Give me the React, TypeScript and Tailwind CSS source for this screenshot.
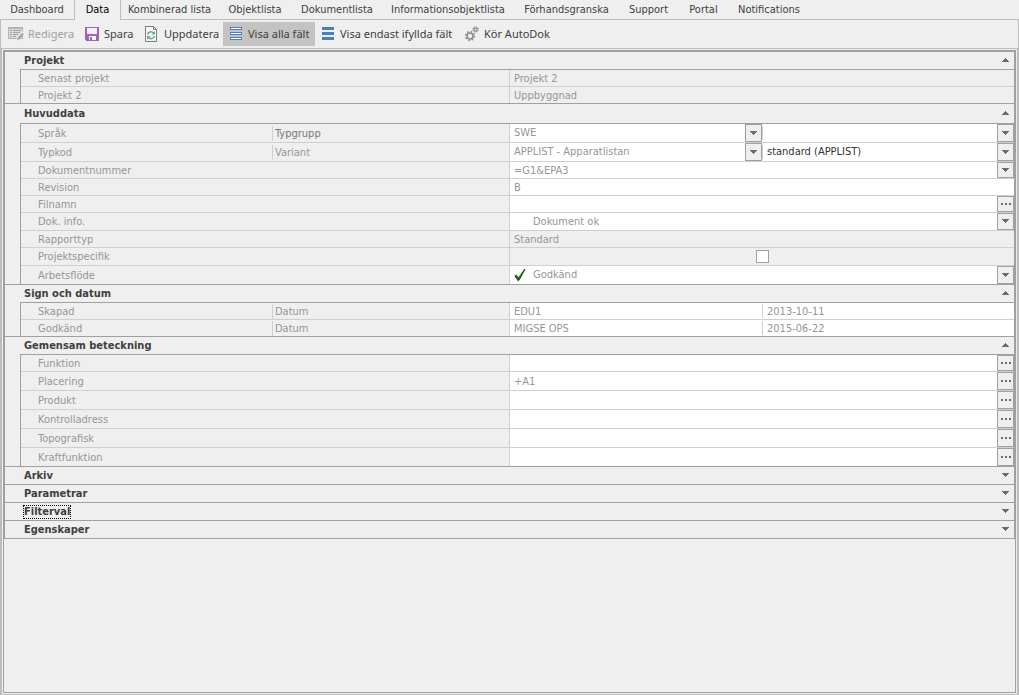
import { useState } from "react";
import type { ReactNode } from "react";
import clsx from "clsx";

const tabs = [
  { name: "Dashboard", width: "w-[74px]" },
  { name: "Data", width: "w-[47px]" },
  { name: "Kombinerad lista", width: "w-[97px]" },
  { name: "Objektlista", width: "w-[74px]" },
  { name: "Dokumentlista", width: "w-[90px]" },
  { name: "Informationsobjektlista", width: "w-[132px]" },
  { name: "Förhandsgranska", width: "w-[105px]" },
  { name: "Support", width: "w-[59px]" },
  { name: "Portal", width: "w-[51px]" },
  { name: "Notifications", width: "w-[80px]" },
];

function EditIcon() {
  return (
    <svg width="16" height="16" viewBox="0 0 16 16" shapeRendering="crispEdges">
      <path d="M0 1h15v12H0z" fill="#b4b4b4" />
      <path d="M1 3h13v9H1z" fill="#dcdcdc" />
      <path d="M2 4h2v1H2zM5 4h8v1H5zM2 6h2v1H2zM5 6h7v1H5zM2 8h2v1H2zM5 8h5v1H5zM2 10h2v1H2zM5 10h3v1H5z" fill="#a4a4a4" />
      <path d="M8 15l1-4 5-6 2 2-5 6z" fill="#efefef" shapeRendering="auto" />
      <path d="M9 14.5l.8-3L14 6.500l1.800 1.800-4.300 5z" fill="#a8a8a8" shapeRendering="auto" />
    </svg>
  );
}

function SaveIcon() {
  return (
    <svg width="16" height="16" viewBox="0 0 16 16" shapeRendering="crispEdges">
      <path d="M1 1h14v14H2l-1-1z" fill="#9b66ba" />
      <path d="M3 2h10v6H3z" fill="#f4f1f6" />
      <path d="M5 10h7v4H5z" fill="#f4f1f6" />
      <path d="M6 11h2v3H6z" fill="#9b66ba" />
    </svg>
  );
}

function RefreshIcon() {
  return (
    <svg width="16" height="16" viewBox="0 0 16 16" fill="none">
      <path d="M1.5.5h8l3 3v12h-11z" fill="#f6f6f6" stroke="#7d7d7d" />
      <path d="M9.5.5v3h3" stroke="#7d7d7d" />
      <path d="M3.5 8.500C4 5.500 8 5 9.700 7.200M10.500 10c-.5 3-4.500 3.500-6.200 1.300" stroke="#6aa58c" strokeWidth="1.5" />
      <path d="M11 5v3.500H7.500zM3 13.500V10h3.500z" fill="#6aa58c" />
    </svg>
  );
}

function AllFieldsIcon() {
  return (
    <svg width="16" height="16" viewBox="0 0 16 16" shapeRendering="crispEdges">
      <path d="M2 1h12v3H2zM2 6h12v3H2zM2 11h12v3H2z" fill="#4a80b8" />
      <path d="M3 2h10v1H3zM3 7h10v1H3zM3 12h10v1H3z" fill="#fff" />
    </svg>
  );
}

function FilledFieldsIcon() {
  return (
    <svg width="16" height="16" viewBox="0 0 16 16" shapeRendering="crispEdges">
      <path d="M2 1h12v3H2zM2 6h12v3H2zM2 11h12v3H2z" fill="#4a80b8" />
    </svg>
  );
}

function GearsIcon() {
  return (
    <svg width="16" height="16" viewBox="0 0 16 16" fill="none" stroke="#8c8c8c">
      <circle cx="6" cy="10" r="3" strokeWidth="1.6" />
      <circle cx="6" cy="10" r="4.4" strokeWidth="1.6" strokeDasharray="1.6 1.856" />
      <circle cx="11.5" cy="3.5" r="1.6" strokeWidth="1.4" />
      <circle cx="11.5" cy="3.5" r="2.6" strokeWidth="1.2" strokeDasharray="1.1 .942" />
    </svg>
  );
}

function CheckIcon() {
  return (
    <svg width="12" height="14" viewBox="0 0 12 14">
      <path d="M.5 8l1.800-1.500 2.200 2.700L10.300 1l1.200.3-5.700 10.400L4 13.200z" fill="#0d4d0d" />
      <path d="M1.500 8l.8-.6 2.200 3L10.300 2 4.500 11.800z" fill="#2c8a1f" />
    </svg>
  );
}

function Arrow({ up }: { up?: boolean }) {
  return (
    <svg width="7" height="5" viewBox="0 0 7 5" fill="#6b6b6b" shapeRendering="crispEdges">
      {up ? <path d="M3 0h1v1h1v1h1v1h1v1H0V3h1V2h1V1h1z" /> : <path d="M0 0h7v1H6v1H5v1H4v1H3V3H2V2H1V1H0z" />}
    </svg>
  );
}

const tools: { name: string; icon: ReactNode; width: string }[] = [
  { name: "Redigera", icon: <EditIcon />, width: "w-[76px]" },
  { name: "Spara", icon: <SaveIcon />, width: "w-[60px]" },
  { name: "Uppdatera", icon: <RefreshIcon />, width: "w-[84px]" },
  { name: "Visa alla fält", icon: <AllFieldsIcon />, width: "w-[92px]" },
  { name: "Visa endast ifyllda fält", icon: <FilledFieldsIcon />, width: "w-[144px]" },
  { name: "Kör AutoDok", icon: <GearsIcon />, width: "w-[98px]" },
];

type Kind = "static" | "text" | "select" | "browse" | "status" | "check";
type Field = { label: string; kind: Kind; value?: string; strong?: boolean; icon?: ReactNode };
type Row = { height: string; fields: Field[] };
type Section = { title: string; header?: string; open?: boolean; rows: Row[] };

const h16 = "h-[16px]";
const h17 = "h-[17px]";
const h18 = "h-[18px]";

const sections: Section[] = [
  {
    title: "Projekt",
    open: true,
    rows: [
      { height: h16, fields: [{ label: "Senast projekt", kind: "static", value: "Projekt 2" }] },
      { height: h16, fields: [{ label: "Projekt 2", kind: "static", value: "Uppbyggnad" }] },
    ],
  },
  {
    title: "Huvuddata",
    header: "h-[19px]",
    open: true,
    rows: [
      {
        height: h18,
        fields: [
          { label: "Språk", kind: "select", value: "SWE" },
          { label: "Typgrupp", kind: "select", value: "", strong: true },
        ],
      },
      {
        height: h18,
        fields: [
          { label: "Typkod", kind: "select", value: "APPLIST - Apparatlistan" },
          { label: "Variant", kind: "select", value: "standard (APPLIST)" },
        ],
      },
      { height: h16, fields: [{ label: "Dokumentnummer", kind: "select", value: "=G1&EPA3" }] },
      { height: h16, fields: [{ label: "Revision", kind: "text", value: "B" }] },
      { height: h16, fields: [{ label: "Filnamn", kind: "browse" }] },
      { height: h17, fields: [{ label: "Dok. info.", kind: "status", value: "Dokument ok" }] },
      { height: h16, fields: [{ label: "Rapporttyp", kind: "static", value: "Standard" }] },
      { height: h17, fields: [{ label: "Projektspecifik", kind: "check" }] },
      { height: h18, fields: [{ label: "Arbetsflöde", kind: "status", value: "Godkänd", icon: <CheckIcon /> }] },
    ],
  },
  {
    title: "Sign och datum",
    open: true,
    rows: [
      {
        height: h16,
        fields: [
          { label: "Skapad", kind: "text", value: "EDU1" },
          { label: "Datum", kind: "text", value: "2013-10-11" },
        ],
      },
      {
        height: h16,
        fields: [
          { label: "Godkänd", kind: "text", value: "MIGSE OPS" },
          { label: "Datum", kind: "text", value: "2015-06-22" },
        ],
      },
    ],
  },
  {
    title: "Gemensam beteckning",
    open: true,
    rows: [
      { height: h16, fields: [{ label: "Funktion", kind: "browse" }] },
      { height: h18, fields: [{ label: "Placering", kind: "browse", value: "+A1" }] },
      { height: h18, fields: [{ label: "Produkt", kind: "browse" }] },
      { height: h18, fields: [{ label: "Kontrolladress", kind: "browse" }] },
      { height: h18, fields: [{ label: "Topografisk", kind: "browse" }] },
      { height: h18, fields: [{ label: "Kraftfunktion", kind: "browse" }] },
    ],
  },
  { title: "Arkiv", rows: [] },
  { title: "Parametrar", rows: [] },
  { title: "Filterval", rows: [] },
  { title: "Egenskaper", rows: [] },
];

function FieldEditor({ field, id }: { field: Field; id: string }) {
  const { kind, value = "", label, icon } = field;
  const color = label === "Variant" ? "text-[#333]" : "text-[#969696]";

  if (kind === "check") {
    return (
      <div className="flex h-full flex-1 items-center justify-center">
        <input
          id={id}
          type="checkbox"
          className="h-[13px] w-[13px] appearance-none border border-[#a0a0a0] bg-white checked:bg-[#6b6b6b]"
        />
      </div>
    );
  }

  if (kind === "select" || kind === "status") {
    return (
      <div className="relative h-full min-w-0 flex-1">
        <select
          id={id}
          defaultValue={value}
          className={clsx("block h-full w-full appearance-none pt-px outline-none", color, kind === "status" ? "pl-[23px]" : "pl-1")}
        >
          <option value={value}>{value}</option>
        </select>
        {icon && <span className="pointer-events-none absolute inset-y-0 left-1 flex items-center">{icon}</span>}
        <span className="pointer-events-none absolute inset-y-0 right-0 flex w-[17px] items-center justify-center border border-[#a0a0a0] bg-[#efefef]">
          <Arrow />
        </span>
      </div>
    );
  }

  return (
    <>
      <input
        id={id}
        type="text"
        defaultValue={value}
        readOnly={kind === "static"}
        className={clsx("h-full min-w-0 flex-1 pl-1 outline-none", color)}
      />
      {kind === "browse" && (
        <button
          aria-label={"Välj " + label}
          className="flex h-full w-[17px] items-center justify-center gap-[2px] border border-[#a0a0a0] bg-[#efefef]"
        >
          <i className="h-[2px] w-[2px] bg-[#6b6b6b]" />
          <i className="h-[2px] w-[2px] bg-[#6b6b6b]" />
          <i className="h-[2px] w-[2px] bg-[#6b6b6b]" />
        </button>
      )}
    </>
  );
}

function PropertyRow({ row, id }: { row: Row; id: string }) {
  const grey = row.fields[0].kind === "static" || row.fields[0].kind === "check";
  return (
    <div
      className={clsx(
        "box-content grid grid-cols-[minmax(0,488fr)_minmax(0,505fr)] grid-rows-1 border-b border-[#cfcfcf] last:border-b-0",
        row.height
      )}
    >
      <div className="flex min-h-0 items-center pl-[17px]">
        {row.fields.map((f, i) => (
          <label
            key={f.label}
            htmlFor={id + "-" + i}
            className={clsx(
              "flex-1 pt-px leading-[14px]",
              i > 0 && "border-l border-[#cfcfcf] pl-[2px]",
              f.strong ? "text-[#777]" : "text-[#969696]"
            )}
          >
            {f.label}
          </label>
        ))}
      </div>
      <div className={clsx("flex h-full min-h-0 min-w-0 border-l border-[#cfcfcf]", !grey && "bg-white")}>
        {row.fields.map((f, i) => (
          <div key={f.label} className="flex h-full min-w-0 flex-1 items-center">
            {i > 0 && <span className="h-[14px] w-px bg-[#cfcfcf]" />}
            <FieldEditor field={f} id={id + "-" + i} />
          </div>
        ))}
      </div>
    </div>
  );
}

export default function App() {
  const [activeTab, setActiveTab] = useState("Data");
  const [view, setView] = useState("Visa alla fält");
  const [focused, setFocused] = useState("Filterval");
  const [open, setOpen] = useState(sections.filter((s) => s.open).map((s) => s.title));

  const toggle = (title: string) => {
    setFocused(title);
    setOpen(open.includes(title) ? open.filter((t) => t !== title) : [...open, title]);
  };

  return (
    <div className="flex min-h-screen flex-col bg-[#efefef] font-['DejaVu_Sans_Condensed','DejaVu_Sans',sans-serif] text-[11px] text-[#404040]">
      <nav role="tablist" className="flex h-5">
        {tabs.map((tab) => {
          const active = tab.name === activeTab;
          return (
            <button
              key={tab.name}
              role="tab"
              aria-selected={active}
              onClick={() => setActiveTab(tab.name)}
              className={clsx(
                "shrink-0 border-[#bdbdbd] whitespace-nowrap",
                tab.width,
                active ? "border-x text-black" : "border-b pt-px"
              )}
            >
              {tab.name}
            </button>
          );
        })}
        <div className="flex-1 border-b border-[#bdbdbd]" />
      </nav>

      <div className="flex h-[29px] items-center border-x border-b border-[#bdbdbd] pl-[2px] font-['Noto_Sans',sans-serif]">
        {tools.map((tool) => (
          <button
            key={tool.name}
            disabled={tool.name === "Redigera"}
            onClick={() => tool.name.startsWith("Visa") && setView(tool.name)}
            className={clsx(
              "flex h-6 shrink-0 items-center gap-1 px-[5px] whitespace-nowrap disabled:text-[#a0a0a0]",
              tool.width,
              view === tool.name && "bg-[#c3c3c3]"
            )}
          >
            <span className="shrink-0">{tool.icon}</span>
            {tool.name}
          </button>
        ))}
      </div>

      <main className="flex flex-1 flex-col border-x-2 border-b border-[#bdbdbd] p-px">
        <div className="flex-1 border border-[#a0a0a0]">
          <div className="border-x border-t border-[#a0a0a0]">
            {sections.map((section) => {
              const isOpen = open.includes(section.title);
              return (
                <section key={section.title} className="border-b border-[#a0a0a0]">
                  <button
                    aria-expanded={isOpen}
                    onClick={() => toggle(section.title)}
                    className={clsx(
                      "flex w-full items-center justify-between pr-[5px] pl-[18px] font-bold",
                      section.header ?? "h-[17px]"
                    )}
                  >
                    <span
                      className={clsx(
                        "border border-dotted leading-[12px]",
                        focused === section.title ? "border-black" : "border-transparent"
                      )}
                    >
                      {section.title}
                    </span>
                    <Arrow up={isOpen} />
                  </button>
                  {isOpen && section.rows.length > 0 && (
                    <div className="ml-[15px] border-t border-l border-[#a0a0a0]">
                      {section.rows.map((row, i) => (
                        <PropertyRow key={i} row={row} id={section.title.replace(/ /g, "-") + "-" + i} />
                      ))}
                    </div>
                  )}
                </section>
              );
            })}
          </div>
        </div>
      </main>
    </div>
  );
}
